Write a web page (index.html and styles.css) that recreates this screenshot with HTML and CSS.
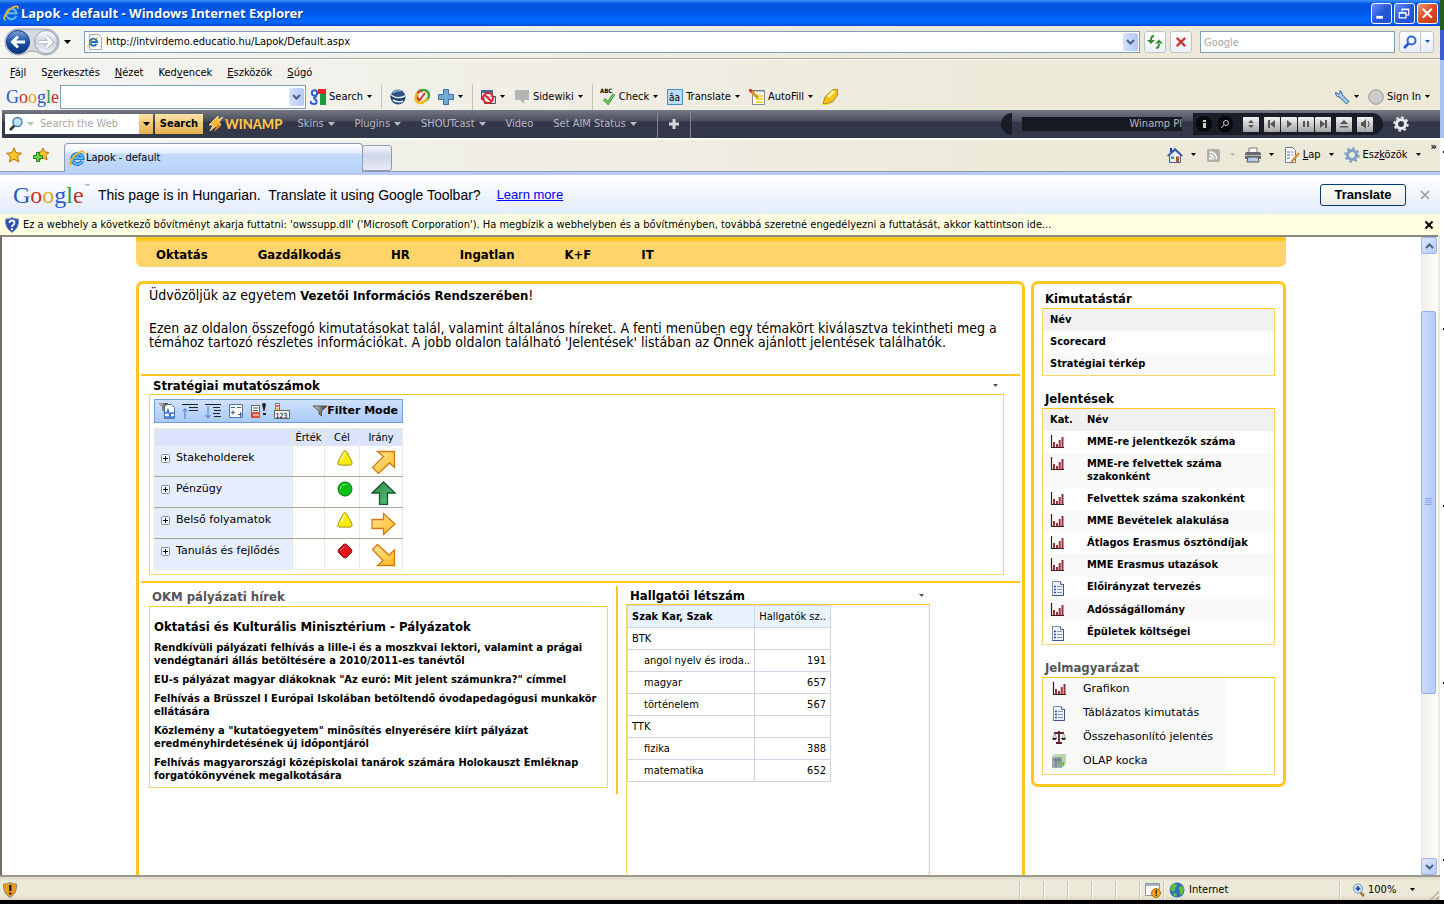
FILE: index.html
```html
<!DOCTYPE html>
<html lang="hu">
<head>
  <meta charset="UTF-8">
  <title>Lapok - default</title>
  <link rel="stylesheet" href="styles.css">
</head>
<body>

<!-- shared icons -->
<svg class="sprite" aria-hidden="true">
  <defs>
    <linearGradient id="g-blue" x1="0" y1="0" x2="0" y2="1"><stop offset="0" stop-color="#7fa3dc"/><stop offset=".5" stop-color="#1c4fa6"/><stop offset="1" stop-color="#0e3479"/></linearGradient>
    <linearGradient id="g-grey" x1="0" y1="0" x2="0" y2="1"><stop offset="0" stop-color="#fdfdfe"/><stop offset=".5" stop-color="#cdd4de"/><stop offset="1" stop-color="#eef2f8"/></linearGradient>
    <linearGradient id="g-gold" x1="0" y1="0" x2="1" y2="1"><stop offset="0" stop-color="#ffe7a0"/><stop offset="1" stop-color="#ffb81c"/></linearGradient>
    <linearGradient id="g-green" x1="0" y1="0" x2="1" y2="1"><stop offset="0" stop-color="#2c8a48"/><stop offset="1" stop-color="#5fc47c"/></linearGradient>
    <linearGradient id="g-fun" x1="0" y1="0" x2="1" y2="0"><stop offset="0" stop-color="#eee"/><stop offset="1" stop-color="#222"/></linearGradient>
  </defs>
  <symbol id="i-ie" viewBox="0 0 16 16">
    <path d="M13.300 10.800A5.200 5.200 0 1 1 13.600 8.300H4.500" fill="none" stroke="#1d62b5" stroke-width="3.600"/>
    <path d="M13.300 10.800A5.200 5.200 0 1 1 13.600 8.300H4.500" fill="none" stroke="#5cbcf6" stroke-width="2"/>
    <path d="M2.600 15C-.6 14.800 2 8.600 7 4.400 11 1 15.600 0 15 3.600" fill="none" stroke="#f2b52a" stroke-width="1.800"/>
  </symbol>
  <symbol id="i-down" viewBox="0 0 7 4"><path d="M1 0h5L3.500 3z"/></symbol>
  <symbol id="i-wdown" viewBox="0 0 7 4"><path d="M0 0h7L3.500 4z"/></symbol>
  <symbol id="i-chev" viewBox="0 0 9 6"><path d="M1 1l3.500 3.500L8 1" fill="none" stroke="#4d6185" stroke-width="2"/></symbol>
  <symbol id="i-lens" viewBox="0 0 16 16"><path d="M7 9l-5 5" stroke="#333" stroke-width="2.500"/><circle cx="9.500" cy="6" r="4.500" fill="#bfe2fb" stroke="#4a7fb5" stroke-width="1.500"/></symbol>
  <symbol id="i-chart" viewBox="0 0 14 14"><path d="M1.500 0v12.500H14" fill="none" stroke="#421c22" stroke-width="1.200"/><path d="M3 7h2v5H3zM6 9h2v3H6zM8.700 5h2v7h-2zM11.500 2h2v10h-2z" fill="#97323d"/></symbol>
  <symbol id="i-doc" viewBox="0 0 14 16"><path d="M1.500 1.500h8l3 3v11h-11z" fill="#eaf1fc" stroke="#7d8eab"/><path d="M9.500 1.500v3h3" fill="#fff" stroke="#526a91"/><path d="M12.500 4v11.500h-11" fill="none" stroke="#3d5580"/><path d="M3 6.500h2M3 9.500h2M3 12.500h2" stroke="#2c4f8e" stroke-width="1.500"/><path d="M6 6.500h5M6 9.500h5M6 12.500h5" stroke="#8195b8"/></symbol>
  <symbol id="i-scale" viewBox="0 0 14 14"><path d="M7 1v11M2 3h10M4 13h6" stroke="#5a2026" stroke-width="1.800"/><path d="M2.500 3L1 8h3.500zM11.500 3L10 8h3.500z" fill="none" stroke="#777" stroke-width=".7"/><path d="M0 8h5l-1 2H1zM9 8h5l-1 2h-3z" fill="#3b2a2c"/></symbol>
  <symbol id="i-cube" viewBox="0 0 14 14"><path d="M0 3h10v11H0z" fill="#9aa9b8"/><path d="M2 0h12v10l-4 4V3H0z" fill="#bcd8b0"/><path d="M1 6h9M4 4v9M7 4v6" stroke="#53705c" stroke-width=".8"/><path d="M7 8h5v4H7z" fill="#7cb56a"/></symbol>
  <symbol id="i-plus" viewBox="0 0 9 9"><rect x=".5" y=".5" width="8" height="8" rx="1" fill="#fff" stroke="#7a8da6"/><path d="M2 4.500h5M4.500 2v5" stroke="#000"/></symbol>
  <symbol id="i-tri" viewBox="0 0 16 16"><path d="M8 .8c1 0 1.600.6 2.200 1.800l4.400 8.600c1 2.500.4 3.900-1.500 3.900H2.900C1 15.100.4 13.700 1.400 11.200L5.800 2.600C6.400 1.400 7 .8 8 .8z" fill="#ffeb0a" stroke="#9c9112"/><path d="M4 10l3.500-7" stroke="#fffcc0" stroke-width="1.500"/></symbol>
  <symbol id="i-dot" viewBox="0 0 16 16"><circle cx="8" cy="8" r="7" fill="#0cc01b" stroke="#087512"/><path d="M3.500 8A4.500 4.500 0 0 1 9 3.500" fill="none" stroke="#7df084"/></symbol>
  <symbol id="i-dia" viewBox="0 0 16 16"><path d="M8 1q1 0 2 1l4 4q2 2 0 4l-4 4q-2 2-4 0L2 10q-2-2 0-4l4-4q1-1 2-1z" fill="#e4151b" stroke="#8d1012"/><path d="M3.500 7.500l4-4" stroke="#ff8a8a"/></symbol>
  <symbol id="i-arrow" viewBox="0 0 25 24"><path d="M1 7.500h11.500V1.500L24 12 12.500 22.500v-6H1z" fill="url(#g-gold)" stroke="#d07a10" stroke-width="1.300"/></symbol>
  <symbol id="i-ne" viewBox="0 0 25 24"><path d="M6.500 1.500h17v16l-5-4.500L7.500 23.500 1.500 17.500 12.500 6.500z" fill="url(#g-gold)" stroke="#d07a10" stroke-width="1.300"/></symbol>
  <symbol id="i-se" viewBox="0 0 25 24"><path d="M1.500 6.500l5-5L18 12l5.500-5v15.500h-17l5.500-5z" fill="url(#g-gold)" stroke="#d07a10" stroke-width="1.300"/></symbol>
  <symbol id="i-up" viewBox="0 0 25 24"><path d="M12.500 1L24 12h-7.500v11.500h-8V12H1z" fill="url(#g-green)" stroke="#175a2a" stroke-width="1.300"/></symbol>
  <symbol id="i-gear" viewBox="0 0 16 16"><circle cx="8" cy="8" r="4.500" fill="none" stroke="currentColor" stroke-width="3"/><circle cx="8" cy="8" r="6.700" fill="none" stroke="currentColor" stroke-width="2" stroke-dasharray="2.600 2.660"/></symbol>
  <symbol id="i-star" viewBox="0 0 16 16"><path d="M8 .8l2.100 5 5.400.4-4.100 3.500 1.300 5.300L8 12.200 3.300 15l1.300-5.300L.5 6.200l5.400-.4z" fill="#ffc629" stroke="#b9700f"/></symbol>
  <symbol id="i-x" viewBox="0 0 10 10"><path d="M1.500 1.500l7 7M8.500 1.500l-7 7" stroke="currentColor" stroke-width="2"/></symbol>
</svg>

<div class="screen">
<div class="window">

  <header class="titlebar">
    <svg class="ic16"><use href="#i-ie"/></svg>
    <span class="title">Lapok - default - Windows Internet Explorer</span>
    <button class="winbtn" aria-label="Minimize"><svg viewBox="0 0 20 20"><path d="M4.500 14h7" stroke="#fff" stroke-width="3"/></svg></button>
    <button class="winbtn" aria-label="Restore"><svg viewBox="0 0 20 20"><path d="M7.500 8V5.500h7v6H12M7 6h8M4.500 9.500h7v5h-7zM4 9h8" fill="none" stroke="#fff" stroke-width="1.300"/></svg></button>
    <button class="winbtn close" aria-label="Close"><svg viewBox="0 0 20 20"><path d="M5 5l9.500 9.500M14.500 5L5 14.500" stroke="#fff" stroke-width="2.200"/></svg></button>
  </header>

  <div class="addressbar">
    <svg class="navbtns" viewBox="0 0 56 28">
      <path d="M14 1h28a13 13 0 0 1 0 26c-6 0-8-4-14-4s-8 4-14 4A13 13 0 0 1 14 1z" fill="#d5dae2" stroke="#9aa3b3"/>
      <circle cx="14" cy="14" r="11.500" fill="url(#g-blue)" stroke="#123a80"/>
      <circle cx="42" cy="14" r="11.500" fill="url(#g-grey)" stroke="#98a2b2"/>
      <path d="M21 14H9M14 8.500L8.500 14l5.500 5.500" fill="none" stroke="#fff" stroke-width="3"/>
      <path d="M35 14h12M42 8.500l5.500 5.500-5.500 5.500" fill="none" stroke="#a5aebb" stroke-width="4"/>
      <path d="M35 14h12M42 8.500l5.500 5.500-5.500 5.500" fill="none" stroke="#fff" stroke-width="2.500"/>
    </svg>
    <svg class="down"><use href="#i-wdown"/></svg>
    <div class="combo address">
      <svg class="ic16" viewBox="0 0 16 16"><path d="M2.500 .5h9l3 3v12h-12z" fill="#fff" stroke="#a9a9a9"/><path d="M9.500 10a3.500 3.500 0 1 1 .5-2H4" fill="none" stroke="#1b6fc4" stroke-width="2"/><path d="M1 13c-1-2 3-8 10-9" fill="none" stroke="#e8a91c"/></svg>
      <input type="text" aria-label="Address" value="http://intvirdemo.educatio.hu/Lapok/Default.aspx">
      <button class="drop" aria-label="Show addresses"><svg><use href="#i-chev"/></svg></button>
    </div>
    <button class="sqbtn" aria-label="Refresh"><svg class="ic16" viewBox="0 0 16 16"><path d="M7 2q-3 0-3 4M9 14q3 0 3-4" fill="none" stroke="#2e8f2e" stroke-width="2"/><path d="M0 6h8L4 10zM8 9.500h8L12 5.500z" fill="#2e8f2e"/></svg></button>
    <button class="sqbtn red" aria-label="Stop"><svg class="ic12"><use href="#i-x"/></svg></button>
    <input class="searchbox" type="text" aria-label="Search" placeholder="Google">
    <div class="split">
      <button aria-label="Search"><svg class="ic14" viewBox="0 0 14 14"><path d="M6 8l-5 5" stroke="#1c55c8" stroke-width="2.500"/><circle cx="8.500" cy="5.500" r="4" fill="#fff" stroke="#2b66dd" stroke-width="2"/></svg></button>
      <button class="narrow" aria-label="Search options"><svg class="down blue"><use href="#i-down"/></svg></button>
    </div>
  </div>

  <nav class="menubar">
    <a href="#"><u>F</u>ájl</a>
    <a href="#">S<u>z</u>erkesztés</a>
    <a href="#"><u>N</u>ézet</a>
    <a href="#">Ked<u>v</u>encek</a>
    <a href="#"><u>E</u>szközök</a>
    <a href="#"><u>S</u>úgó</a>
  </nav>

  <div class="googlebar">
    <span class="glogo small"><i class="b">G</i><i class="r">o</i><i class="y">o</i><i class="b">g</i><i class="g">l</i><i class="r">e</i></span>
    <div class="combo gsearch">
      <input type="text" aria-label="Google search">
      <button class="drop" aria-label="History"><svg><use href="#i-chev"/></svg></button>
    </div>
    <button class="tool"><svg class="ic16" viewBox="0 0 16 16"><path d="M0 0h8v8H0z" fill="#fff"/><path d="M8 0h8v5H8z" fill="#e22"/><path d="M10 5h6v11h-6z" fill="#1a9c3c"/><path d="M0 11h9v5H0z" fill="#fff"/><circle cx="4.500" cy="4" r="2.700" fill="none" stroke="#2a5fd0" stroke-width="2"/><path d="M7 7q-5 2-1 4 2 4-2 4-4 0-3-3" fill="none" stroke="#2a5fd0" stroke-width="2"/></svg>Search<svg class="down"><use href="#i-down"/></svg></button>
    <span class="grip"></span>
    <button class="tool" aria-label="Earth"><svg class="ic16" viewBox="0 0 16 16"><circle cx="8" cy="8" r="7.500" fill="#2e5283"/><path d="M0 6q7 5 15 1 0 3-1 5-7 1-13-3z" fill="#1b3860"/><path d="M1 6q6 5 14 1M3 11q5 3 10 1" fill="none" stroke="#dbe9f6" stroke-width="1.500"/><path d="M3 4q3-3 8-2" fill="none" stroke="#86b0dc" stroke-width="1.500"/></svg></button>
    <button class="tool" aria-label="Share"><svg class="ic16" viewBox="0 0 16 16"><path d="M9 2a5 5 0 0 0-4 9" fill="none" stroke="#dd3322" stroke-width="2.500"/><path d="M6 1q8-1 9 5 0 4-4 6" fill="none" stroke="#37a634" stroke-width="2.500"/><path d="M3 4q-4 9 3 10 5 0 7-5" fill="none" stroke="#f3bd1b" stroke-width="2.500"/><path d="M11 4L5 12" stroke="#dd3322" stroke-width="2"/></svg></button>
    <button class="tool" aria-label="Add"><svg class="ic16" viewBox="0 0 16 16"><path d="M5.500 .5h5v5h5v5h-5v5h-5v-5h-5v-5h5z" fill="#77a9d6" stroke="#3d6f9f"/></svg><svg class="down"><use href="#i-down"/></svg></button>
    <span class="sep"></span>
    <button class="tool" aria-label="Popup blocker"><svg class="ic16" viewBox="0 0 16 16"><path d="M1.500 1.500h11v9h-11z" fill="#fff" stroke="#345"/><path d="M1 1h12v3H1z" fill="#4a6a92"/><path d="M4.500 7.500h11v7h-11z" fill="#dde" stroke="#456"/><circle cx="8" cy="9" r="5" fill="#fff" fill-opacity=".6" stroke="#d22" stroke-width="2"/><path d="M5 6l6 6" stroke="#d22" stroke-width="2"/></svg><svg class="down"><use href="#i-down"/></svg></button>
    <button class="tool"><svg class="ic16" viewBox="0 0 16 16"><path d="M1 1h14v10H10v4l-4-4H1z" fill="#b5b5b5"/></svg>Sidewiki<svg class="down"><use href="#i-down"/></svg></button>
    <span class="sep"></span>
    <button class="tool"><svg class="ic16 check" viewBox="0 0 16 16"><text x="0" y="4" font-size="6" font-weight="bold">ABC</text><path d="M4 10l4 4 6-9" fill="none" stroke="#2e8b2e" stroke-width="3"/><path d="M4 10l4 4 6-9" fill="none" stroke="#8ddc6a" stroke-width="1.200"/></svg>Check<svg class="down"><use href="#i-down"/></svg></button>
    <button class="tool"><svg class="ic16 check" viewBox="0 0 16 16"><rect x=".5" y=".5" width="15" height="15" fill="#b9ddf7" stroke="#4a8fc8"/><text x="2" y="11.500" font-size="10">âa</text></svg>Translate<svg class="down"><use href="#i-down"/></svg></button>
    <button class="tool"><svg class="ic16" viewBox="0 0 16 16"><path d="M3.500 1.500h12v14h-12z" fill="#fff" stroke="#889"/><path d="M5 1v2M8 1v2M11 1v2M14 1v2" stroke="#555"/><path d="M5 6h9v2H5zM7 9h7v2H7zM7 12h7v2H7z" fill="#f5dc3c"/><path d="M1 1l8 8" stroke="#d99a1f" stroke-width="3"/><path d="M0 0l3 3" stroke="#d33" stroke-width="3"/></svg>AutoFill<svg class="down"><use href="#i-down"/></svg></button>
    <button class="tool" aria-label="Highlight"><svg class="ic16" viewBox="0 0 16 16"><path d="M3 8l8-7.500h4.500V6l-5 7-5 1.500L1 15z" fill="#f2c21a" stroke="#b58a0c"/><path d="M6 8l6-6" stroke="#fff3a8" stroke-width="2.500"/><path d="M0 15.500h7" stroke="#ffe600"/></svg></button>
    <span class="fill"></span>
    <button class="tool" aria-label="Settings"><svg class="ic16" viewBox="0 0 16 16"><path d="M6 6l8 8" stroke="#35699a" stroke-width="4.500"/><path d="M1.500 3.500q0 5 5 4.500 3-2 1-5L6 1.500v3L4.500 5z" fill="#a5cdec" stroke="#35699a"/><path d="M5.500 5.500l8 8" stroke="#a5cdec" stroke-width="2.600"/></svg><svg class="down"><use href="#i-down"/></svg></button>
    <button class="tool"><svg class="ic16" viewBox="0 0 16 16"><circle cx="8" cy="8" r="7.300" fill="#ccc" stroke="#999"/></svg>Sign In<svg class="down"><use href="#i-down"/></svg></button>
  </div>

  <div class="winamp">
    <div class="wsearch">
      <svg class="ic16"><use href="#i-lens"/></svg>
      <svg class="down pale"><use href="#i-wdown"/></svg>
      <input type="text" aria-label="Search the web" placeholder="Search the Web">
    </div>
    <button class="gold" aria-label="Engines"><svg class="down"><use href="#i-wdown"/></svg></button>
    <button class="gold wide">Search</button>
    <span class="wlogo"><svg class="ic16" viewBox="0 0 16 16"><path d="M10 0L1 9h4l-3 6 6-5 5-1-2-3 4-5-5 3z" fill="#f7b62c" stroke="#fff1c0" stroke-width=".8"/><path d="M15 3l-5 5 3 2-7 6 2-5" fill="#d98416"/></svg>WINAMP</span>
    <a href="#">Skins<svg class="down"><use href="#i-wdown"/></svg></a>
    <a href="#">Plugins<svg class="down"><use href="#i-wdown"/></svg></a>
    <a href="#">SHOUTcast<svg class="down"><use href="#i-wdown"/></svg></a>
    <a href="#">Video</a>
    <a href="#">Set AIM Status<svg class="down"><use href="#i-wdown"/></svg></a>
    <button class="wadd" aria-label="Add button"><svg class="ic12" viewBox="0 0 12 12"><path d="M6 1v10M1 6h10" stroke="#d5d7da" stroke-width="3"/></svg></button>
    <span class="fill"></span>
    <span class="wcap"></span>
    <span class="wdisplay">Winamp Pl</span>
    <div class="wplayer">
      <button class="round" aria-label="Info"><svg class="ic16" viewBox="0 0 16 16"><path d="M7 4h3v2H7zM7 7h3v5H7z" fill="#ccc"/></svg></button>
      <button class="round" aria-label="Find"><svg class="ic16" viewBox="0 0 16 16"><circle cx="9" cy="7" r="2.500" fill="none" stroke="#ccc"/><path d="M7 9l-3 3" stroke="#ccc"/></svg></button>
      <button class="key lead" aria-label="Volume"><svg class="ic16" viewBox="0 0 16 16"><path d="M8 4l3 3H5zM8 12l3-3H5z"/></svg></button>
      <button class="key" aria-label="Previous"><svg class="ic16" viewBox="0 0 16 16"><path d="M4 4h2v8H4zM11 4v8L6 8z"/></svg></button>
      <button class="key" aria-label="Play"><svg class="ic16" viewBox="0 0 16 16"><path d="M6 4l5 4-5 4z"/></svg></button>
      <button class="key" aria-label="Pause"><svg class="ic16" viewBox="0 0 16 16"><path d="M5 5h2v6H5zM9 5h2v6H9z"/></svg></button>
      <button class="key" aria-label="Next"><svg class="ic16" viewBox="0 0 16 16"><path d="M5 4v8l5-4zM10 4h2v8h-2z"/></svg></button>
      <button class="key" aria-label="Eject"><svg class="ic16" viewBox="0 0 16 16"><path d="M8 4l4 4H4zM4 10h8v1.500H4z"/></svg></button>
      <button class="key" aria-label="Mute"><svg class="ic16" viewBox="0 0 16 16"><path d="M4 6h2l3-3v10l-3-3H4z"/><path d="M11 5q2 3 0 6" fill="none" stroke="#555"/></svg></button>
    </div>
    <button class="wgear" aria-label="Winamp settings"><svg class="ic16"><use href="#i-gear"/></svg></button>
  </div>

  <div class="tabrow">
    <button class="tool" aria-label="Favourites"><svg class="ic16"><use href="#i-star"/></svg></button>
    <button class="tool addfav" aria-label="Add to favourites"><svg class="ic16" viewBox="0 0 16 16"><path d="M10 1l2 4 4 .5-3 3 1 4.500-4-2-4 2 1-4.500-3-3L8 5z" fill="#ffc629" stroke="#b9700f"/><path d="M3.500 5.500h3v3h3v3h-3v3h-3v-3h-3v-3h3z" fill="#6cd34e" stroke="#267a1c"/></svg></button>
    <button class="tab"><svg class="ic16"><use href="#i-ie"/></svg>Lapok - default</button>
    <button class="newtab" aria-label="New tab"></button>
    <span class="fill"></span>
    <button class="tool" aria-label="Home"><svg class="ic16" viewBox="0 0 16 16"><path d="M2.500 8v7.500h11V8L8 2.500z" fill="#e8eef8" stroke="#45608f"/><path d="M0 8.500L8 .8l8 7.700-1.500 1L8 4 1.500 9.500z" fill="#3a5da8"/><path d="M3 1h2v4H3z" fill="#2136c0"/><path d="M4 9.500h3V12H4z" fill="#5a7dbb"/><path d="M9 9.500h3v6H9z" fill="#a55b28"/></svg><svg class="down"><use href="#i-down"/></svg></button>
    <button class="tool" aria-label="Feeds"><svg class="ic16" viewBox="0 0 16 16"><rect x="1" y="2" width="13" height="13" rx="2" fill="#b0b0ab"/><circle cx="4.500" cy="11.500" r="1.400" fill="#fff"/><path d="M3.500 8q4 0 4 4.500M3.500 5q7 0 7 7.500" fill="none" stroke="#fff" stroke-width="1.500"/></svg><svg class="down pale2"><use href="#i-down"/></svg></button>
    <button class="tool" aria-label="Print"><svg class="ic16" viewBox="0 0 16 16"><path d="M4 1h8v5H4z" fill="#fff" stroke="#777"/><path d="M1 5h14q1 1 1 3v4H0V8q0-2 1-3z" fill="#6c6c70"/><path d="M0 8h16v1H0z" fill="#bbb"/><path d="M3 10h10l1 5H2z" fill="#b9cbe6" stroke="#555"/></svg><svg class="down"><use href="#i-down"/></svg></button>
    <button class="tool"><svg class="ic16" viewBox="0 0 16 16"><path d="M1.500 .5h7l3 3v12h-10z" fill="#fff" stroke="#6c7c98"/><path d="M3 5h3M3 8h3M3 11h3" stroke="#3b62ad"/><path d="M7 5h3M7 8h2" stroke="#999"/><path d="M15 6l-6 7-1.500 2" stroke="#d98a2c" stroke-width="2.500" fill="none"/></svg><span><u>L</u>ap</span><svg class="down"><use href="#i-down"/></svg></button>
    <button class="tool"><svg class="ic16 steel"><use href="#i-gear"/></svg><span>Esz<u>k</u>özök</span><svg class="down"><use href="#i-down"/></svg></button>
    <button class="tool more" aria-label="More">»</button>
  </div>

  <div class="translatebar">
    <span class="glogo"><i class="b">G</i><i class="r">o</i><i class="y">o</i><i class="b">g</i><i class="g">l</i><i class="r">e</i><sup>™</sup></span>
    <span class="msg" lang="en">This page is in Hungarian.&nbsp; Translate it using Google Toolbar?</span>
    <a href="#" lang="en">Learn more</a>
    <span class="fill"></span>
    <button class="go">Translate</button>
    <button class="bare grey" aria-label="Close"><svg class="ic12" viewBox="0 0 12 12"><path d="M2 2l8 8M10 2l-8 8" stroke="currentColor" stroke-width="1.600"/></svg></button>
  </div>

  <div class="infobar">
    <svg class="ic16" viewBox="0 0 16 16"><path d="M8 .5q3 1.800 6.500 1.500 1 9-6.500 13.500Q.5 11 1.500 2 5 2.300 8 .5z" fill="#2a50b4" stroke="#8b98b5"/><path d="M5.500 6q0-2.500 2.500-2.500T10.500 6Q10.500 7.500 8 9v1" fill="none" stroke="#fff" stroke-width="1.800"/><circle cx="8" cy="12.200" r="1.100" fill="#fff"/></svg>
    <span>Ez a webhely a következő bővítményt akarja futtatni: 'owssupp.dll' ('Microsoft Corporation'). Ha megbízik a webhelyben és a bővítményben, továbbá szeretné engedélyezni a futtatását, akkor kattintson ide...</span>
    <span class="fill"></span>
    <button class="bare" aria-label="Close"><svg class="ic10"><use href="#i-x"/></svg></button>
  </div>

  <div class="pane">
    <div class="viewport">
      <div class="page">
        <nav class="topnav">
          <a href="#">Oktatás</a>
          <a href="#">Gazdálkodás</a>
          <a href="#">HR</a>
          <a href="#">Ingatlan</a>
          <a href="#">K+F</a>
          <a href="#">IT</a>
        </nav>

        <div class="columns">
          <main class="panel">
            <div class="intro">
              <p>Üdvözöljük az egyetem <b>Vezetői Információs Rendszerében</b>!</p>
              <p>Ezen az oldalon összefogó kimutatásokat talál, valamint általános híreket. A fenti menüben egy témakört kiválasztva tekintheti meg a témához tartozó részletes információkat. A jobb oldalon található 'Jelentések' listában az Önnek ajánlott jelentések találhatók.</p>
            </div>

            <section class="strategy">
              <h2>Stratégiai mutatószámok<svg class="down soft"><use href="#i-down"/></svg></h2>
              <div class="box">
                <div class="scorebar">
                  <svg class="ic16" viewBox="0 0 16 16"><path d="M5.500 1.500h7l3 3v11h-10z" fill="#fff" stroke="#4671ae"/><path d="M0 0h9L5.500 4v5L3.500 7V4z" fill="url(#g-fun)" stroke="#555" stroke-width=".6"/><path d="M5 10h3l1-3 2 6 1-3h3M6 14h9" fill="none" stroke="#2f6fd0" stroke-width="1.400"/></svg>
                  <svg class="ic16" viewBox="0 0 16 16"><path d="M0 1.500h16M7 4.500h9M7 7.500h9" stroke="#222"/><path d="M3 16V6M.5 8.500L3 5.500l2.500 3" fill="none" stroke="#4a76c4"/></svg>
                  <svg class="ic16" viewBox="0 0 16 16"><path d="M0 1.500h16M8 4.500h7M9 7.500h7M8 10.500h7M9 13.500h7" stroke="#222"/><path d="M3 3v12M.5 12L3 15l2.500-3" fill="none" stroke="#4a76c4"/></svg>
                  <svg class="ic16" viewBox="0 0 16 16"><path d="M1.500 1.500h13v13h-13z" fill="#fff" stroke="#56759f"/><path d="M3 4.500h4M9 4.500h4M3 9.500h4M5 7.500v4M10 11.500h5M12.500 9v5" stroke="#3d5f94" stroke-width="1.200"/></svg>
                  <svg class="ic16" viewBox="0 0 16 16"><path d="M.5 2.500h8v12h-8z" fill="#fff" stroke="#666"/><path d="M2 5h5M2 7.500h5" stroke="#555"/><path d="M1 9h8v6H1z" fill="#e2502c"/><path d="M2 12h6" stroke="#fff"/><path d="M11 1q2-2 4 0l-1.500 7h-1zM12 10h3v2h-3z" fill="#222"/></svg>
                  <svg class="ic16 num" viewBox="0 0 16 16"><path d="M1.500 .5h4v12h-4z" fill="#fff" stroke="#777"/><circle cx="3.500" cy="3" r="1.300" fill="#f33"/><circle cx="3.500" cy="6" r="1.300" fill="#fb0"/><path d="M.5 7.500h15v8H.5z" fill="#eee" stroke="#567"/><text x="1.500" y="14.500" font-size="7">123</text></svg>
                  <button class="filter"><svg class="ic14" viewBox="0 0 14 12"><path d="M0 1h14L8.500 6v5L6 9V6z" fill="url(#g-fun)" stroke="#555"/></svg>Filter Mode</button>
                </div>
                <table class="score">
                  <thead><tr><th></th><th>Érték</th><th>Cél</th><th>Irány</th></tr></thead>
                  <tbody>
                    <tr><td><svg class="ic9"><use href="#i-plus"/></svg>Stakeholderek</td><td></td><td><svg class="ic16"><use href="#i-tri"/></svg></td><td><svg class="dir"><use href="#i-ne"/></svg></td></tr>
                    <tr><td><svg class="ic9"><use href="#i-plus"/></svg>Pénzügy</td><td></td><td><svg class="ic16"><use href="#i-dot"/></svg></td><td><svg class="dir"><use href="#i-up"/></svg></td></tr>
                    <tr><td><svg class="ic9"><use href="#i-plus"/></svg>Belső folyamatok</td><td></td><td><svg class="ic16"><use href="#i-tri"/></svg></td><td><svg class="dir"><use href="#i-arrow"/></svg></td></tr>
                    <tr><td><svg class="ic9"><use href="#i-plus"/></svg>Tanulás és fejlődés</td><td></td><td><svg class="ic16"><use href="#i-dia"/></svg></td><td><svg class="dir"><use href="#i-se"/></svg></td></tr>
                  </tbody>
                </table>
              </div>
            </section>

            <div class="lower">
              <section class="news">
                <h2 class="muted">OKM pályázati hírek</h2>
                <div class="box">
                  <h3>Oktatási és Kulturális Minisztérium - Pályázatok</h3>
                  <a href="#">Rendkívüli pályázati felhívás a lille-i és a moszkvai lektori, valamint a prágai vendégtanári állás betöltésére a 2010/2011-es tanévtől</a>
                  <a href="#">EU-s pályázat magyar diákoknak "Az euró: Mit jelent számunkra?" címmel</a>
                  <a href="#">Felhívás a Brüsszel I Európai Iskolában betöltendő óvodapedagógusi munkakör ellátására</a>
                  <a href="#">Közlemény a "kutatóegyetem" minősítés elnyerésére kiírt pályázat eredményhirdetésének új időpontjáról</a>
                  <a href="#">Felhívás magyarországi középiskolai tanárok számára Holokauszt Emléknap forgatókönyvének megalkotására</a>
                </div>
              </section>
              <section class="students">
                <h2>Hallgatói létszám<svg class="down soft"><use href="#i-down"/></svg></h2>
                <div class="box">
                  <table>
                    <thead><tr><th>Szak Kar, Szak</th><th>Hallgatók sz..</th></tr></thead>
                    <tbody>
                      <tr><td>BTK</td><td></td></tr>
                      <tr class="sub"><td>angol nyelv és iroda..</td><td>191</td></tr>
                      <tr class="sub"><td>magyar</td><td>657</td></tr>
                      <tr class="sub"><td>történelem</td><td>567</td></tr>
                      <tr><td>TTK</td><td></td></tr>
                      <tr class="sub"><td>fizika</td><td>388</td></tr>
                      <tr class="sub"><td>matematika</td><td>652</td></tr>
                    </tbody>
                  </table>
                </div>
              </section>
            </div>
          </main>

          <aside class="panel side">
            <h2>Kimutatástár</h2>
            <table class="list">
              <thead><tr><th>Név</th></tr></thead>
              <tbody>
                <tr><td><a href="#">Scorecard</a></td></tr>
                <tr><td><a href="#">Stratégiai térkép</a></td></tr>
              </tbody>
            </table>

            <h2>Jelentések</h2>
            <table class="list reports">
              <thead><tr><th>Kat.</th><th>Név</th></tr></thead>
              <tbody>
                <tr><td><svg class="ic14"><use href="#i-chart"/></svg></td><td><a href="#">MME-re jelentkezők száma</a></td></tr>
                <tr><td><svg class="ic14"><use href="#i-chart"/></svg></td><td><a href="#">MME-re felvettek száma szakonként</a></td></tr>
                <tr><td><svg class="ic14"><use href="#i-chart"/></svg></td><td><a href="#">Felvettek száma szakonként</a></td></tr>
                <tr><td><svg class="ic14"><use href="#i-chart"/></svg></td><td><a href="#">MME Bevételek alakulása</a></td></tr>
                <tr><td><svg class="ic14"><use href="#i-chart"/></svg></td><td><a href="#">Átlagos Erasmus ösztöndíjak</a></td></tr>
                <tr><td><svg class="ic14"><use href="#i-chart"/></svg></td><td><a href="#">MME Erasmus utazások</a></td></tr>
                <tr><td><svg class="ic16"><use href="#i-doc"/></svg></td><td><a href="#">Előirányzat tervezés</a></td></tr>
                <tr><td><svg class="ic14"><use href="#i-chart"/></svg></td><td><a href="#">Adósságállomány</a></td></tr>
                <tr><td><svg class="ic16"><use href="#i-doc"/></svg></td><td><a href="#">Épületek költségei</a></td></tr>
              </tbody>
            </table>

            <h2 class="muted">Jelmagyarázat</h2>
            <div class="legendbox">
              <ul>
                <li><svg class="ic14"><use href="#i-chart"/></svg>Grafikon</li>
                <li><svg class="ic16"><use href="#i-doc"/></svg>Táblázatos kimutatás</li>
                <li><svg class="ic14"><use href="#i-scale"/></svg>Összehasonlító jelentés</li>
                <li><svg class="ic14"><use href="#i-cube"/></svg>OLAP kocka</li>
              </ul>
            </div>
          </aside>
        </div>
      </div>
    </div>
    <div class="scrollbar">
      <button class="scrollbtn" aria-label="Scroll up"><svg class="flip"><use href="#i-chev"/></svg></button>
      <div class="track"><div class="thumb"></div></div>
      <button class="scrollbtn" aria-label="Scroll down"><svg><use href="#i-chev"/></svg></button>
    </div>
  </div>

  <footer class="statusbar">
    <svg class="ic16" viewBox="0 0 16 16"><path d="M8 .5q3 1.800 6.500 1.500 1 9-6.500 13.500Q.5 11 1.500 2 5 2.300 8 .5z" fill="#f39a12" stroke="#888"/><path d="M7 3h2.500v6H7zM7 10.500h2.500v2H7z" fill="#222"/></svg>
    <span class="fill"></span>
    <span class="cell"></span><span class="cell"></span><span class="cell"></span><span class="cell"></span><span class="cell"></span>
    <span class="cell warn"><svg class="ic16" viewBox="0 0 16 16"><path d="M.5 1.500h14v12H.5z" fill="#fff" stroke="#8a94a5"/><path d="M1 2h13v2H1z" fill="#a9b6cc"/><circle cx="11" cy="11" r="4.500" fill="#f6a21b" stroke="#b36c08"/><path d="M10.500 8h1.500v3.500h-1.500zM10.500 12.500h1.500v1.500h-1.500z" fill="#222"/></svg></span>
    <span class="cell zone"><svg class="ic16" viewBox="0 0 16 16"><circle cx="8" cy="8" r="7.500" fill="#2a6fc6"/><path d="M3 3q3-3 5 0 0 2-2 3 1 3-1 3-2 1-4-1zM10 5q3-2 5 1 0 5-3 7-2-1-1-4-2-2-1-4zM5 11l3 1-1 3-3-2z" fill="#62bf3d"/></svg>Internet</span>
    <span class="cell zoomcell"><svg class="ic14" viewBox="0 0 14 14"><path d="M8 9l4 4" stroke="#a07a3a" stroke-width="2.500"/><circle cx="6" cy="5.500" r="4.500" fill="#e2f0fd" stroke="#6a8fbf"/><path d="M3.500 5.500h5M6 3v5" stroke="#1c4fb0" stroke-width="1.800"/></svg>100%<svg class="down"><use href="#i-down"/></svg></span>
    <span class="resize"></span>
  </footer>

</div>
<div class="desktop"></div>
</div>

</body>
</html>
```
FILE: styles.css
```css
:root {
  --ui: "DejaVu Sans Condensed", "DejaVu Sans", sans-serif;
  --body: "DejaVu Sans", sans-serif;
  --gold: #ffc61e;
  --gold-light: #ffd46b;
  --chrome: #ece9d8;
}

* {
  box-sizing: border-box;
}

body {
  margin: 0;
  height: 100vh;
  overflow: hidden;
  background: #000;
  font: 11px/14px var(--ui);
  color: #000;
}

/* kept rendered so the gradients inside still resolve */
.sprite {
  position: absolute;
  width: 0;
  height: 0;
}

svg {
  display: block;
  flex: none;
}

button {
  font: inherit;
  color: inherit;
  padding: 0;
  border: 0;
  background: none;
  display: flex;
  align-items: center;
  justify-content: center;
  flex: none;
}

input {
  font: inherit;
  color: #000;
  border: 0;
  padding: 0;
  background: none;
  min-width: 0;
  outline: none;
}

a {
  color: inherit;
  text-decoration: none;
}

h2, h3, p, ul {
  margin: 0;
  padding: 0;
}

.ic9 { width: 9px; height: 9px; }
.ic10 { width: 10px; height: 10px; }
.ic12 { width: 12px; height: 12px; }
.ic14 { width: 14px; height: 14px; }
.ic16 { width: 16px; height: 16px; }

.down {
  width: 7px;
  height: 4px;
}
.down.blue { fill: #1c55c8; }
.down.pale { fill: #a9cfa9; }
.down.pale2 { fill: #bbb; }
.down.soft { fill: #555; }

.fill {
  flex: 1;
}

/* window */

.screen {
  display: flex;
  height: 100vh;
  padding-bottom: 4px;
}

.window {
  flex: 1;
  min-width: 0;
  display: flex;
  flex-direction: column;
  background: linear-gradient(90deg, #f4f4f2, #ece9d8 75%);
}

.desktop {
  width: 4px;
  background:
    linear-gradient(#245c1c 0 30px, #3b5bd0 30px 60px, #a8c2f2 60px 138px, transparent 138px),
    linear-gradient(90deg, #fff 3px, transparent 3px),
    repeating-linear-gradient(#fff 0 151px, #000 151px 153px, #fff 153px 177px);
}

.titlebar {
  flex: none;
  height: 26px;
  display: flex;
  align-items: center;
  gap: 2px;
  padding: 0 2px 0 3px;
  background: linear-gradient(#3a92fb, #0553e2 4px, #0156ea 12px, #0266fd 20px, #0266fd 23px, #0144cf);
}

.title {
  flex: 1;
  color: #fff;
  font: bold 13px/18px "Noto Sans", sans-serif;
  text-shadow: 1px 1px #0a2f8c;
}

.winbtn {
  width: 21px;
  height: 21px;
  border: 1px solid #fff;
  border-radius: 3px;
  background: linear-gradient(135deg, #6a93f0, #2457d8 50%, #1f4fcd);
}
.winbtn.close {
  background: linear-gradient(135deg, #f09a7d, #da4a21 50%, #c93a12);
}
.winbtn svg {
  width: 19px;
  height: 19px;
}

.addressbar {
  flex: none;
  height: 33px;
  display: flex;
  align-items: center;
  padding: 0 6px 0 4px;
  border-bottom: 1px solid #aca899;
}

.navbtns {
  width: 56px;
  height: 28px;
}
.addressbar > .down {
  margin: 0 13px 0 4px;
}

.combo {
  display: flex;
  align-items: center;
  background: #fff;
  border: 1px solid #7f9db9;
}
.combo input {
  flex: 1;
}
.address {
  flex: 1;
  height: 22px;
  gap: 3px;
  padding: 0 1px 0 2px;
  margin-right: 4px;
}

.drop {
  width: 15px;
  height: 18px;
  border-radius: 2px;
  background: linear-gradient(90deg, #d5e0fc, #b4c8f6);
}
.drop svg, .scrollbtn svg {
  width: 9px;
  height: 6px;
}

.sqbtn {
  width: 22px;
  height: 22px;
  margin-right: 4px;
  border: 1px solid #bfc3cd;
  border-radius: 3px;
  background: linear-gradient(#fff, #ebeef5);
}
.red {
  color: #c43a3a;
}

.searchbox {
  width: 195px;
  height: 22px;
  margin: 0 4px;
  padding: 0 3px;
  background: #fff;
  border: 1px solid #7f9db9;
}
.searchbox::placeholder, .wsearch input::placeholder {
  color: #a8a8a0;
  opacity: 1;
}

.split {
  display: flex;
  height: 22px;
  border: 1px solid #bfc3cd;
  border-radius: 3px;
  background: linear-gradient(#fff, #e6ecf8);
}
.split button {
  width: 20px;
}
.split .narrow {
  width: 13px;
  border-left: 1px solid #bfc3cd;
}

.menubar {
  flex: none;
  height: 25px;
  display: flex;
  align-items: center;
  gap: 15px;
  padding: 1px 10px 0;
  border-top: 1px solid #fff;
}

.googlebar {
  flex: none;
  height: 26px;
  display: flex;
  align-items: center;
  padding: 0 9px 1px 6px;
}

.glogo {
  display: flex;
  width: 79px;
  font: 24px/30px "Liberation Serif", serif;
}
.glogo.small {
  width: 54px;
  font-size: 18px;
  line-height: 22px;
}
.glogo i {
  font-style: normal;
}
.glogo sup {
  font: 7px/14px var(--body);
  color: #777;
}
.b { color: #2a56c6; }
.r { color: #c4302b; }
.y { color: #e0a71c; }
.g { color: #2f9a3a; }

.gsearch {
  width: 246px;
  height: 24px;
  padding: 0 1px;
  margin-right: 4px;
}

.tool {
  gap: 3px;
  margin-right: 8px;
}
.googlebar .tool:last-child, .tabrow .tool:last-child {
  margin-right: 0;
}

.grip {
  width: 1px;
  height: 24px;
  margin-right: 8px;
  background: #c9c6b8;
}
.sep {
  width: 1px;
  height: 26px;
  margin-right: 7px;
  background: #c5c2b0;
}
.check, .num {
  overflow: visible;
}

/* winamp toolbar */

.winamp {
  flex: none;
  height: 28px;
  margin-left: 2px;
  display: flex;
  align-items: center;
  padding: 0 31px 0 3px;
  background: linear-gradient(#747884, #4a4e5b 11px, #31364a 12px, #343948);
  color: #b9bbc2;
  fill: #b9bbc2;
}
.winamp > a {
  display: flex;
  align-items: center;
  gap: 4px;
  margin-right: 20px;
}

.wsearch {
  width: 134px;
  height: 20px;
  display: flex;
  align-items: center;
  gap: 3px;
  padding-left: 3px;
  background: #fff;
}
.wsearch input {
  flex: 1;
  margin-left: 3px;
}

.gold {
  width: 14px;
  height: 20px;
  margin-right: 2px;
  background: linear-gradient(#fbe3a8, #e3b04c);
  color: #000;
  fill: #000;
}
.gold.wide {
  width: 48px;
  margin-right: 5px;
  font-weight: bold;
}

.wlogo {
  display: flex;
  align-items: center;
  gap: 1px;
  margin-right: 15px;
  color: #fcc44b;
  font: 900 13px/16px Lato, sans-serif;
}

.wadd {
  width: 34px;
  height: 28px;
  border: solid #82858f;
  border-width: 0 1px;
}

.wcap {
  width: 11px;
  height: 22px;
  margin-right: 10px;
  border-radius: 11px 0 0 11px;
  background: #1a1d27;
}
.wdisplay {
  width: 160px;
  height: 14px;
  margin-right: 11px;
  text-align: right;
  background: #171a22;
}
.wplayer {
  width: 190px;
  height: 22px;
  display: flex;
  align-items: center;
  gap: 1px;
  padding: 0 3px;
  border-radius: 0 11px 11px 0;
  background: #1a1d27;
}
.round {
  width: 16px;
  height: 16px;
  margin-right: 4px;
  border-radius: 8px;
  background: #07080b;
}
.key {
  width: 16px;
  height: 15px;
  border-radius: 1px;
  background: linear-gradient(#f4f4f4, #a5a5a5);
  fill: #555;
}
.key.lead {
  margin: 0 4px 0 5px;
}
.key:nth-last-child(2) {
  margin: 0 4px;
}
.wgear {
  margin-left: 10px;
  color: #e9e9e9;
}

/* tabs */

.tabrow {
  flex: none;
  height: 37px;
  display: flex;
  align-items: center;
  padding: 2px 3px 4px 6px;
  border-top: 2px solid #fff;
  border-bottom: 3px solid #b9cbf5;
  box-shadow: inset 0 -1px #8f9bb5;
}
.tabrow .tool {
  margin-right: 9px;
}
.tabrow .tool .down {
  margin-left: 4px;
}
.tabrow .addfav {
  margin-left: 2px;
}
.tab {
  align-self: flex-end;
  width: 299px;
  height: 29px;
  margin: 0 0 -4px 6px;
  padding-left: 4px;
  gap: 1px;
  justify-content: flex-start;
  border: 1px solid #8f9bb5;
  border-bottom: 0;
  border-radius: 4px 4px 0 0;
  background: linear-gradient(#fff, #e3effd 9px, #c3dcfb 10px, #b9d3fb);
}
.newtab {
  align-self: flex-end;
  width: 30px;
  height: 26px;
  margin: 0 0 -3px -1px;
  border: 1px solid #8f9bb5;
  border-radius: 3px;
  background: linear-gradient(#f4f5fb, #d0d6ea 10px, #e8ebf6);
}
.steel {
  color: #7fa0c4;
}
.more {
  align-self: flex-start;
  height: 10px;
  font-weight: bold;
}

/* notification bars */

.translatebar {
  flex: none;
  height: 39px;
  display: flex;
  align-items: center;
  padding: 0 9px 0 13px;
  background: linear-gradient(#fff, #e3ecfa);
  font: 13px/18px "Liberation Sans", Arial, sans-serif;
}
.translatebar .msg {
  margin: 0 16px 0 6px;
  font-size: 14px;
}
.translatebar a {
  color: #00f;
  text-decoration: underline;
}
.go {
  width: 86px;
  height: 22px;
  margin-right: 13px;
  border: 1px solid #003c74;
  border-radius: 3px;
  background: linear-gradient(#fff, #ecebe5);
  font-weight: bold;
}
.grey {
  color: #999;
}

.infobar {
  flex: none;
  height: 21px;
  display: flex;
  align-items: center;
  gap: 3px;
  padding: 0 6px 0 4px;
  background: #ffffe1;
  white-space: nowrap;
}

/* page */

.pane {
  flex: 1;
  min-height: 0;
  display: flex;
  margin-right: 2px;
  border: solid #716f64;
  border-width: 2px 0 0 2px;
  border-top-color: #8a887c;
  background: #fff;
}

.viewport {
  flex: 1;
  min-width: 0;
  padding-right: 1px;
  overflow: hidden;
}

.page {
  max-width: 1150px;
  margin: 0 auto;
}

.topnav {
  display: flex;
  gap: 50px;
  height: 30px;
  padding: 5px 20px 0;
  border-top: 4px solid var(--gold);
  border-radius: 0 0 6px 6px;
  background: var(--gold-light);
  font: bold 13px/17px var(--ui);
}

.columns {
  display: flex;
  align-items: flex-start;
  gap: 6px;
  margin-top: 14px;
}

.panel {
  flex: 1;
  min-width: 0;
  border: 3px solid var(--gold);
  border-radius: 7px;
  padding: 0 2px;
}

.intro {
  height: 90px;
  padding: 4px 8px;
  font: 14px/14px var(--ui);
}
.intro b {
  font-size: 13px;
}
.intro p + p {
  margin-top: 18px;
}

.panel h2 {
  display: flex;
  align-items: center;
  font: bold 13px/17px var(--ui);
}
.panel h2 .down {
  margin-left: auto;
}
.panel .muted {
  color: #555;
}

.box {
  border: 1px solid var(--gold-light);
  border-top-color: var(--gold);
}

.strategy {
  border: solid var(--gold);
  border-width: 2px 0;
  padding: 1px 16px 6px 8px;
}
.strategy h2 {
  padding: 0 5px 0 4px;
}
.strategy .box {
  height: 181px;
  padding: 4px;
}

.scorebar {
  display: flex;
  align-items: center;
  gap: 7px;
  width: 249px;
  height: 24px;
  padding: 0 4px;
  border: 1px solid #6f9ddd;
  background: linear-gradient(#cfe1fb, #a9cbf8);
}
.filter {
  margin-left: auto;
  font: bold 11px/14px var(--body);
}

.score {
  table-layout: fixed;
  width: 249px;
  margin-top: 5px;
  border-collapse: collapse;
  border: 1px solid #ece9d8;
}
.score th, .score td {
  padding: 0;
  border-left: 1px solid #ece9d8;
}
.score th {
  height: 17px;
  width: 35px;
  padding-top: 2px;
  line-height: 14px;
  background: #dbe4fc;
  font-weight: normal;
}
.score th:first-child { width: 138px; }
.score th:nth-child(2) { width: 32px; }
.score th:last-child { width: 43px; }
.score td {
  height: 31px;
  padding: 4px 0 0 5px;
  vertical-align: top;
  border-bottom: 1px solid #a8a694;
}
.score tr:last-child td {
  border-bottom-color: #ece9d8;
}
.score td:first-child {
  padding: 5px 0 0 21px;
  background: #e6eefe;
  font-family: var(--body);
}
.score td .ic9 {
  float: left;
  margin: 3px 0 0 -15px;
}
.score .ic16 {
  margin: 0 auto;
}
.dir {
  width: 25px;
  height: 24px;
  margin: 0 auto;
}

.lower {
  display: flex;
  align-items: flex-start;
  padding: 3px 0 0 8px;
}
.news {
  width: 469px;
  padding: 2px 8px 6px 0;
  border-right: 2px solid var(--gold);
}
.news h2 {
  padding-left: 3px;
  margin-bottom: 1px;
}
.news .box {
  padding: 12px 4px 5px;
}
.news h3 {
  margin-bottom: 7px;
  font: bold 13px/15px var(--ui);
}
.news a {
  display: block;
  margin-bottom: 6px;
  font: bold 11px/13px var(--ui);
}
.news a:last-child {
  margin-bottom: 0;
}

.students {
  width: 304px;
  margin-left: 8px;
}
.students h2 {
  padding: 1px 5px 0 4px;
}
.students .box {
  height: 400px;
}
.students table {
  width: 204px;
  border-collapse: collapse;
}
.students th, .students td {
  height: 22px;
  padding: 0 4px;
  border: 1px solid #cdd6e8;
  text-align: left;
  white-space: nowrap;
}
.students th {
  background: #e8f1fe;
}
.students th:last-child {
  width: 76px;
  font-weight: normal;
}
.students .sub td {
  padding-left: 16px;
}
.students td:last-child {
  text-align: right;
}

/* sidebar */

.side {
  flex: none;
  width: 255px;
  padding: 6px 8px 9px;
}
.side h2 {
  padding-left: 3px;
  margin-bottom: 1px;
}
.list, .legendbox {
  width: 233px;
  margin-bottom: 14px;
  border: 1px solid var(--gold-light);
  border-top-color: var(--gold);
}
.list {
  border-spacing: 0;
  font: bold 11px/13px var(--ui);
}
.list th {
  background: #f1f1f1;
  text-align: left;
}
.list th, .list td {
  height: 22px;
  padding: 4px 7px 5px;
  vertical-align: top;
}
.list tbody tr:nth-child(even) {
  background: #f9f9f9;
}
.reports th:first-child {
  width: 37px;
  padding-right: 0;
}
.reports td:first-child {
  padding: 4px 0 3px 7px;
}
.legendbox {
  margin-bottom: 0;
}
.legendbox ul {
  width: 182px;
  background: #f9f9f9;
  list-style: none;
  font-family: var(--body);
}
.legendbox li {
  display: flex;
  align-items: center;
  gap: 16px;
  height: 24px;
  padding: 0 0 3px 8px;
}
.legendbox svg {
  width: 16px;
}

/* scrollbar */

.scrollbar {
  flex: none;
  width: 17px;
  display: flex;
  flex-direction: column;
  background: linear-gradient(90deg, #eeede5, #fefefb);
}
.scrollbtn {
  width: 16px;
  height: 17px;
  border: 1px solid #9db5ee;
  border-radius: 2px;
  background: linear-gradient(135deg, #dfe8fe, #b5caf8);
}
.flip {
  rotate: 180deg;
}
.track {
  flex: 1;
  padding-top: 57px;
}
.thumb {
  width: 15px;
  height: 70%;
  border: 1px solid #98b0ea;
  border-radius: 2px;
  background:
    repeating-linear-gradient(#8caaf0 0 1px, transparent 1px 2px) center / 7px 8px no-repeat,
    linear-gradient(90deg, #cad8fd, #b7cbfb);
}

/* status bar */

.statusbar {
  flex: none;
  height: 25px;
  display: flex;
  align-items: center;
  padding: 3px 1px 0 2px;
  border-top: 2px solid #9d9a8c;
  background: linear-gradient(#dcdaca, #ece9d8 4px, #ece9d8 18px, #dad7c4);
}
.cell {
  width: 24px;
  height: 18px;
  display: flex;
  align-items: center;
  gap: 4px;
  border-left: 1px solid #c5c2b0;
  box-shadow: inset 1px 0 #fff;
}
.warn {
  padding-left: 5px;
}
.zone {
  width: 176px;
  padding-left: 5px;
}
.zoomcell {
  width: 88px;
  gap: 2px;
  padding-left: 12px;
}
.zoomcell .down {
  margin-left: 11px;
}
.resize {
  width: 12px;
  height: 12px;
  align-self: flex-end;
  background: repeating-linear-gradient(135deg, transparent 0 2px, #b8b4a2 2px 4px);
  clip-path: polygon(100% 0, 100% 100%, 0 100%);
}
```
